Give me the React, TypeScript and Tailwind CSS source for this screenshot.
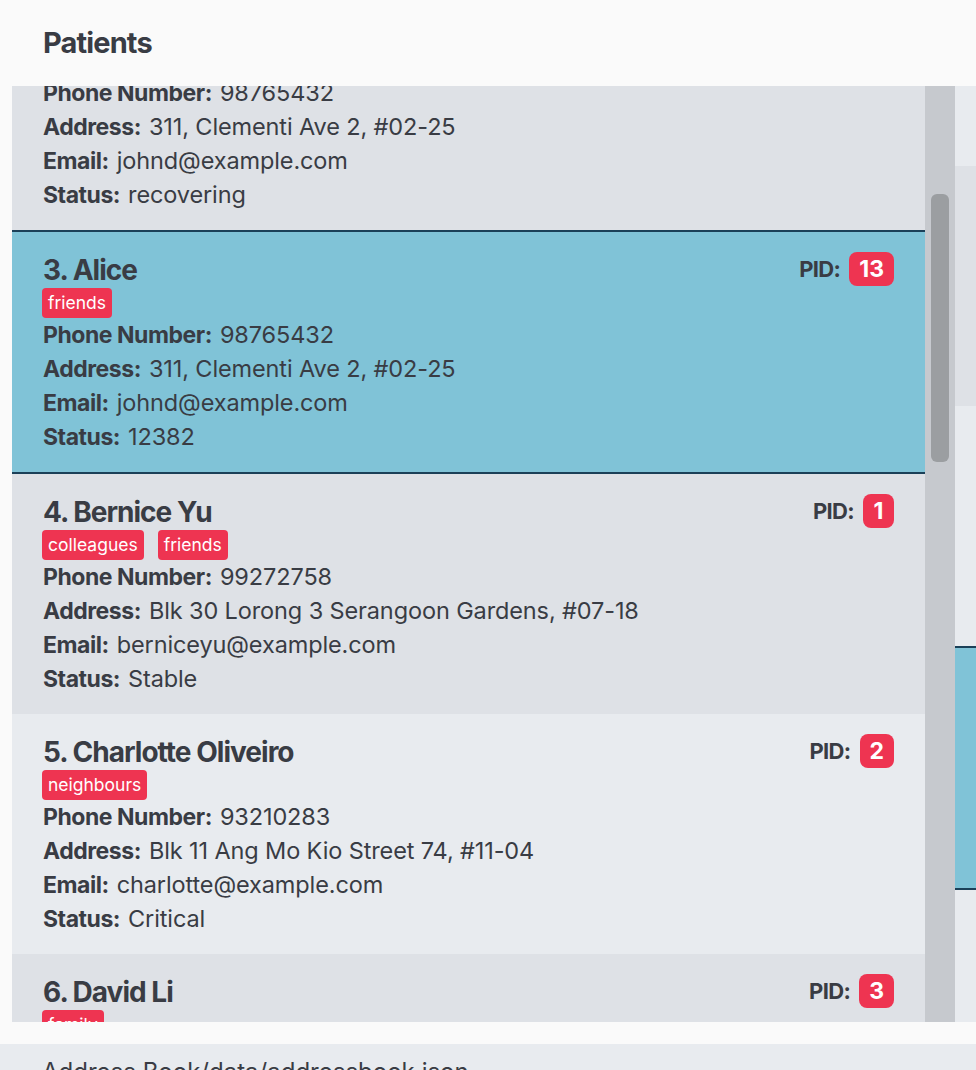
import React from 'react'

interface Patient {
  index: number
  name: string
  pid: number
  tags: string[]
  phone: string
  address: string
  email: string
  status: string
}

const patients: Patient[] = [
  { index: 2, name: 'Bernice Yu', pid: 12, tags: [], phone: '98765432', address: '311, Clementi Ave 2, #02-25', email: 'johnd@example.com', status: 'recovering' },
  { index: 3, name: 'Alice', pid: 13, tags: ['friends'], phone: '98765432', address: '311, Clementi Ave 2, #02-25', email: 'johnd@example.com', status: '12382' },
  { index: 4, name: 'Bernice Yu', pid: 1, tags: ['colleagues', 'friends'], phone: '99272758', address: 'Blk 30 Lorong 3 Serangoon Gardens, #07-18', email: 'berniceyu@example.com', status: 'Stable' },
  { index: 5, name: 'Charlotte Oliveiro', pid: 2, tags: ['neighbours'], phone: '93210283', address: 'Blk 11 Ang Mo Kio Street 74, #11-04', email: 'charlotte@example.com', status: 'Critical' },
  { index: 6, name: 'David Li', pid: 3, tags: ['family'], phone: '91031282', address: 'Blk 436 Serangoon Gardens Street 26, #16-43', email: 'lidavid@example.com', status: 'Stable' }
]

const SELECTED = 3

function Field({ label, value }: { label: string; value: string }) {
  return (
    <div className="h-[34px] leading-[34px] whitespace-nowrap">
      <span className="text-[23px] font-bold tracking-[-0.02em] mr-[8px]">{label}</span>
      <span className="text-[23.5px] tracking-[-0.005em]">{value}</span>
    </div>
  )
}

function PatientCard({ p, stripe }: { p: Patient; stripe: boolean }) {
  const selected = p.index === SELECTED
  const bg = selected
    ? 'bg-[#80c3d7] border-y-2 border-[#1b4058]'
    : stripe
      ? 'bg-[#dee1e6]'
      : 'bg-[#e8ebef]'

  return (
    <div className={`${bg} shrink-0 pt-5 pb-[18px] px-[31px]`}>
      {/* Name + PID */}
      <div className="flex items-center justify-between h-[34px]">
        <div className="text-[28px] font-bold tracking-[-0.035em] leading-[34px] translate-y-[1px]">
          {p.index}. {p.name}
        </div>
        <div className="flex items-center gap-[9px]">
          <span className="text-[22px] font-bold tracking-[-0.03em]">PID:</span>
          <span className="h-[34px] min-w-[31px] px-[10px] rounded-lg bg-[#ee3451] text-white text-[23px] font-bold leading-[34px] text-center">
            {p.pid}
          </span>
        </div>
      </div>

      {/* Tags */}
      <div className="flex gap-[14px] mt-[2px] h-[30px] -ml-px">
        {p.tags.map(t => (
          <span key={t} className="h-[30px] px-[6px] rounded bg-[#ee3451] text-white text-[17.5px] leading-[30px]">
            {t}
          </span>
        ))}
      </div>

      <Field label="Phone Number:" value={p.phone} />
      <Field label="Address:" value={p.address} />
      <Field label="Email:" value={p.email} />
      <Field label="Status:" value={p.status} />
    </div>
  )
}

export default function App() {
  return (
    <div className="w-[976px] h-[1070px] overflow-hidden bg-[#fafafa] flex flex-col font-['Inter','Noto_Sans',sans-serif] text-[#393c44]">
      {/* Header */}
      <div className="h-[86px] shrink-0 flex items-center pl-[43px]">
        <h1 className="text-[29px] font-bold tracking-[-0.03em]">Patients</h1>
      </div>

      <div className="flex h-[936px] shrink-0">
        {/* Patient list */}
        <div className="w-[955px] pl-3 flex">
          <div className="flex-1 overflow-hidden flex flex-col">
            <div className="-mt-[96px] flex flex-col">
              {patients.map((p, i) => (
                <PatientCard key={p.index} p={p} stripe={i % 2 === 0} />
              ))}
            </div>
          </div>
          {/* Scrollbar */}
          <div className="w-[30px] bg-[#c6c9ce] pt-[108px] px-[6px]">
            <div className="h-[268px] rounded-md bg-[#9b9ea1]" />
          </div>
        </div>

        {/* Neighbouring list, mostly off-screen */}
        <div className="flex-1 flex flex-col overflow-hidden">
          <div className="h-[80px] shrink-0 bg-[#e8ebef]" />
          <div className="h-[240px] shrink-0 bg-[#dee1e6]" />
          <div className="h-[240px] shrink-0 bg-[#e8ebef]" />
          <div className="h-[244px] shrink-0 bg-[#80c3d7] border-y-2 border-[#1b4058]" />
          <div className="flex-1 bg-[#e8ebef]" />
        </div>
      </div>

      <div className="h-[22px] shrink-0" />

      {/* Status bar */}
      <div className="flex-1 bg-[#e8ebef] pl-[42px] pt-[13px]">
        <span className="text-[24px] leading-[30px] whitespace-nowrap">Address Book/data/addressbook.json</span>
      </div>
    </div>
  )
}
